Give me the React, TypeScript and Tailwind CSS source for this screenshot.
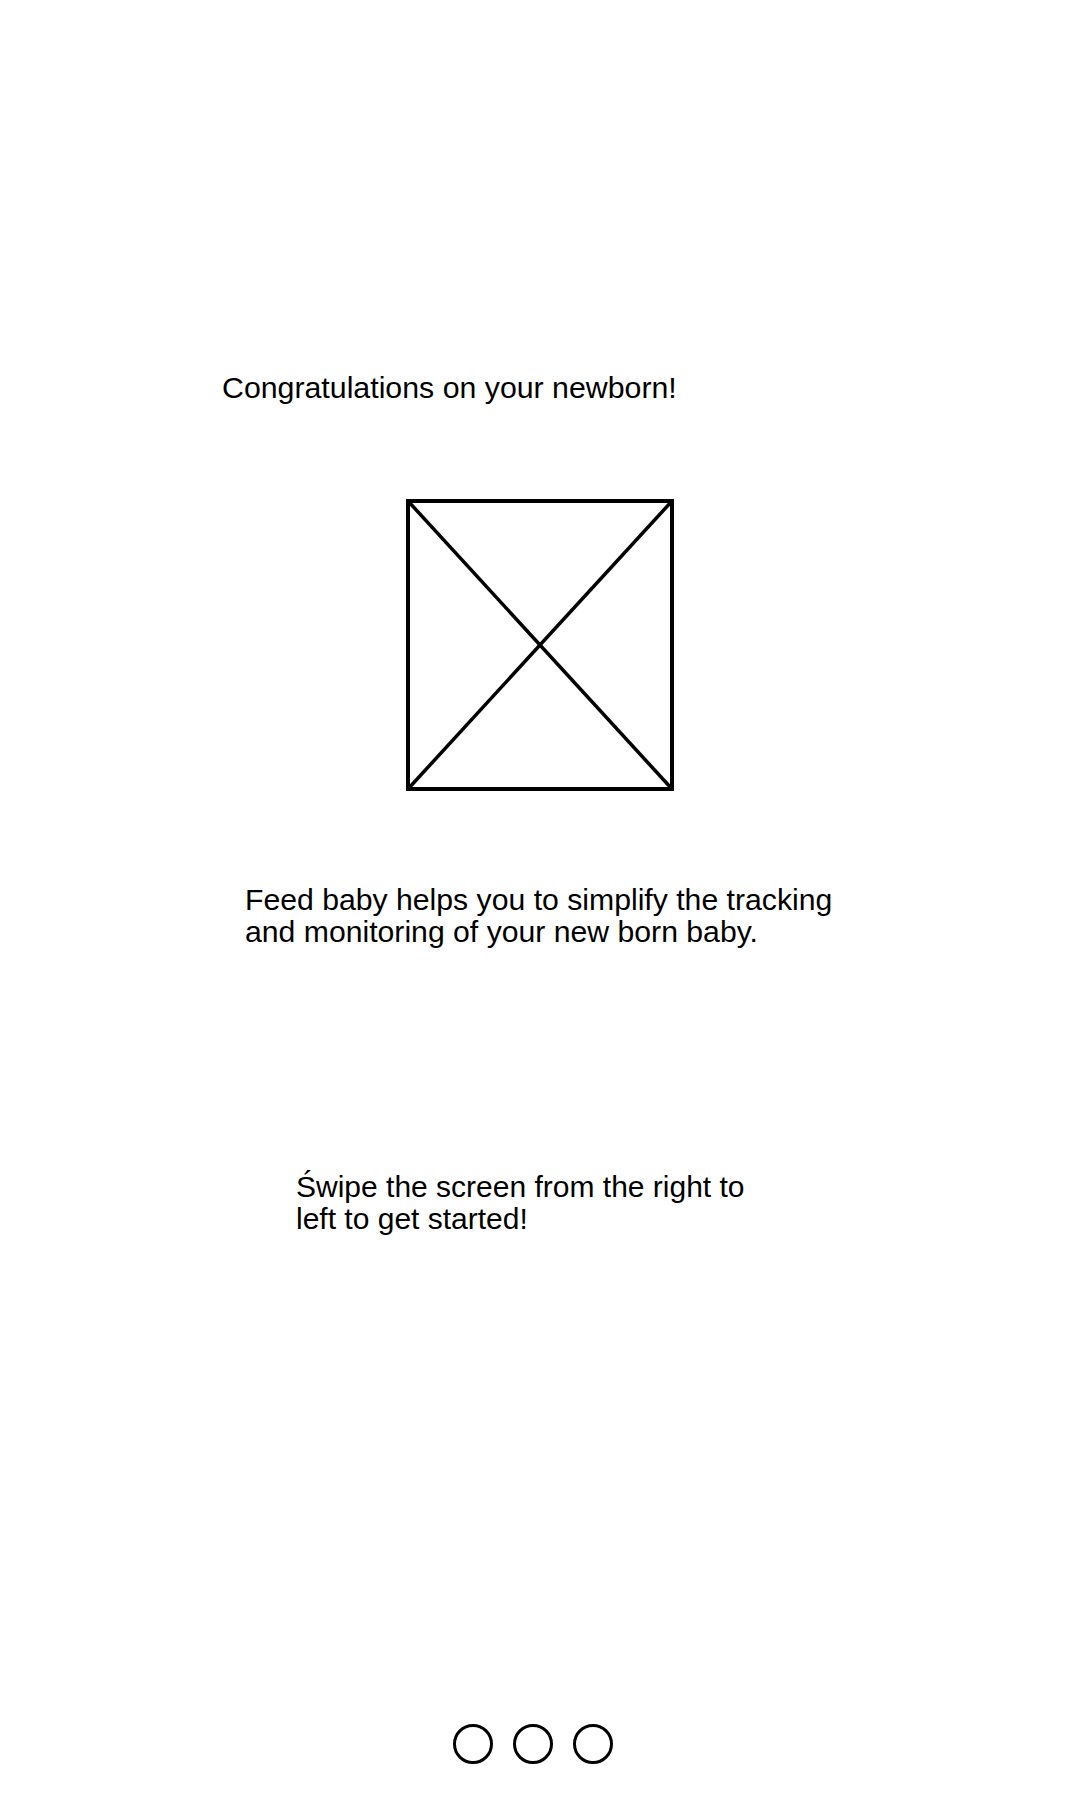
import React from "react";

export default function App() {
  return (
    <div className="w-[1080px] h-[1800px] bg-white flex flex-col pt-[371px] text-black" style={{ fontFamily: '"Liberation Sans", Arial, sans-serif' }}>
      <div className="pl-[222px] text-[30.3px] leading-[34px]">Congratulations on your newborn!</div>
      <div className="mt-[94px] flex justify-center">
        <svg width="268" height="292" viewBox="0 0 268 292">
          <rect x="2" y="2" width="264" height="288" fill="none" stroke="black" strokeWidth="4" />
          <line x1="2" y1="2" x2="266" y2="290" stroke="black" strokeWidth="3.5" />
          <line x1="266" y1="2" x2="2" y2="290" stroke="black" strokeWidth="3.5" />
        </svg>
      </div>
      <div className="mt-[93px] pl-[245px] text-[30.2px] leading-[32px]">
        <div>Feed baby helps you to simplify the tracking</div>
        <div>and monitoring of your new born baby.</div>
      </div>
      <div className="mt-[223px] pl-[296px] text-[30px] leading-[32px]">
        <div>Świpe the screen from the right to</div>
        <div>left to get started!</div>
      </div>
      <div className="mt-[489px] pl-[453px] flex gap-[20px]">
        <div className="w-[40px] h-[40px] rounded-full border-[3px] border-black" />
        <div className="w-[40px] h-[40px] rounded-full border-[3px] border-black" />
        <div className="w-[40px] h-[40px] rounded-full border-[3px] border-black" />
      </div>
    </div>
  );
}
